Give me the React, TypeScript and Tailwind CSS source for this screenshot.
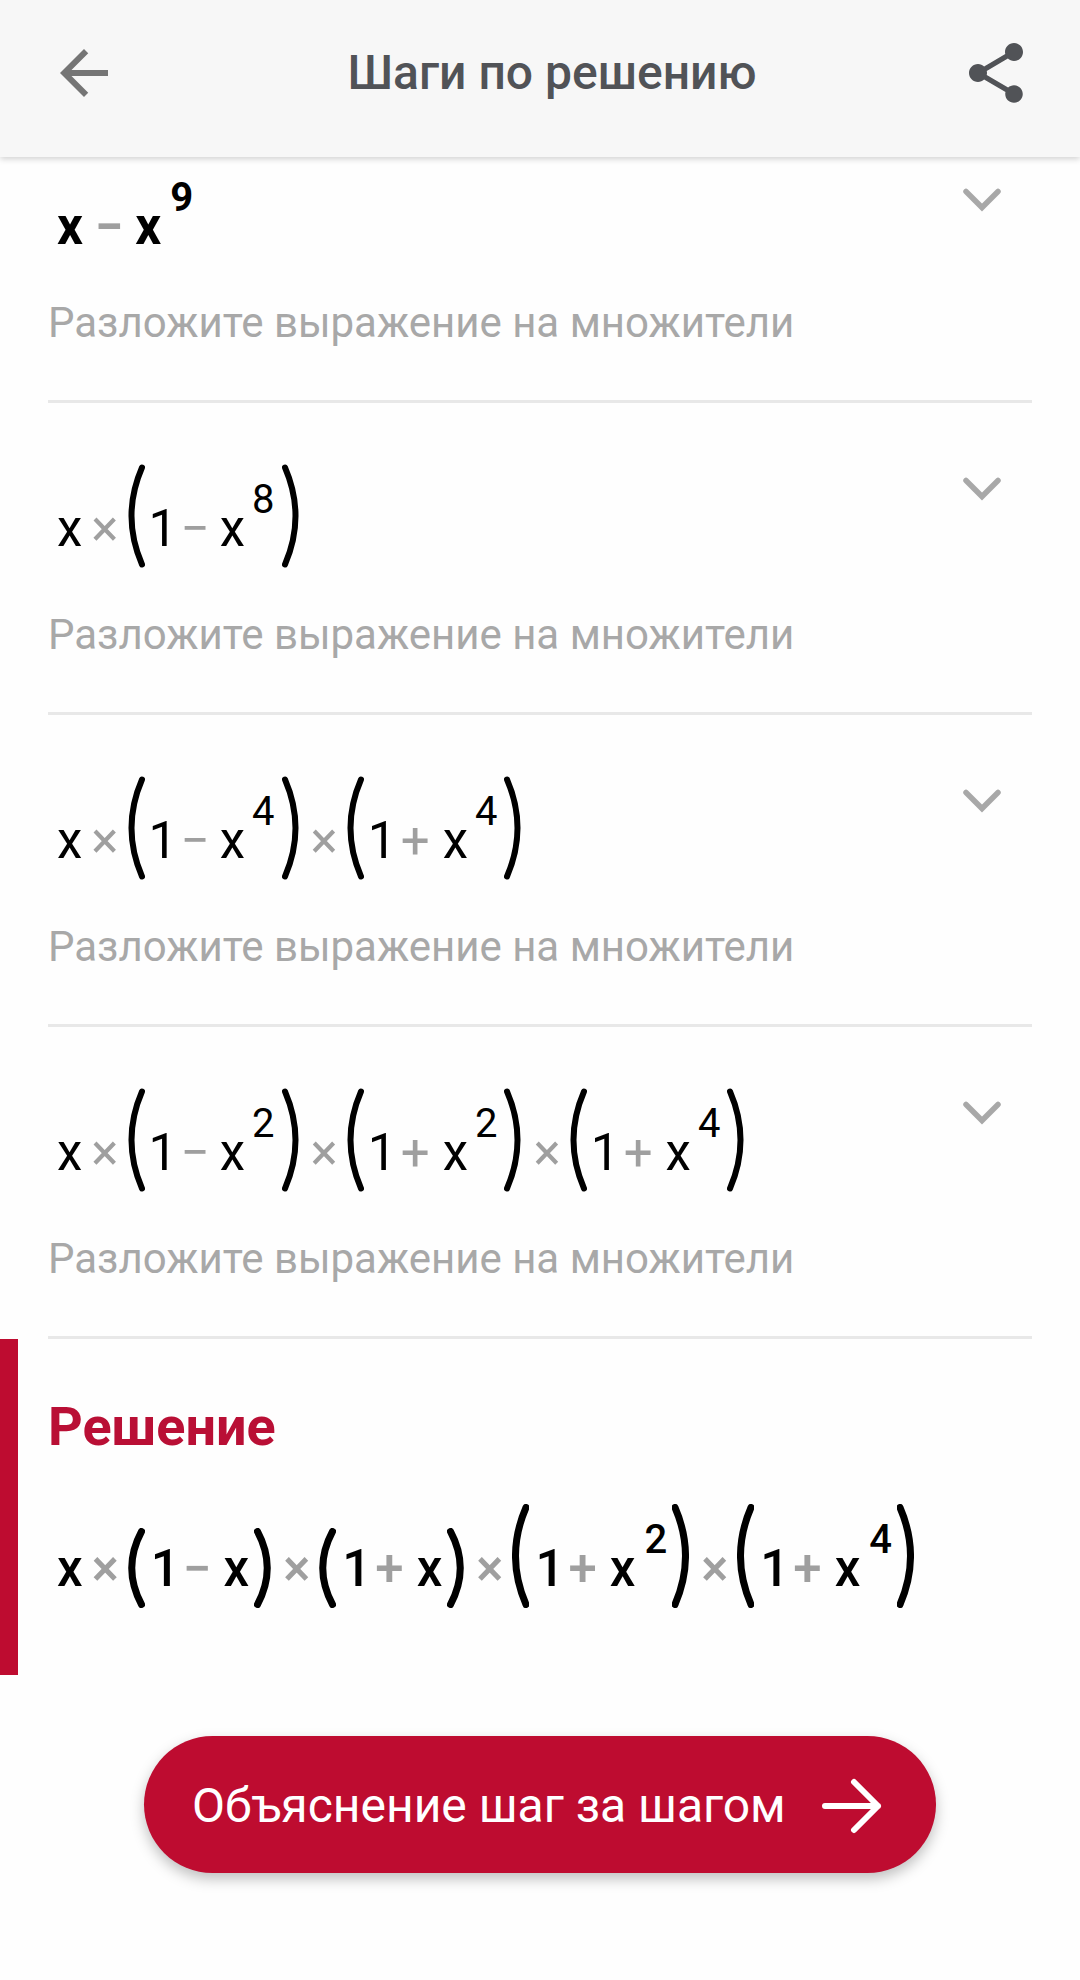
import { FC, ReactNode } from "react";
import { MdArrowBack, MdShare } from "react-icons/md";

interface ParenProps {
  tall?: boolean;
  close?: boolean;
  heavy?: boolean;
}

const Paren: FC<ParenProps> = ({ tall, close, heavy }) => {
  const height = tall ? 104 : 80;
  const d = tall ? "M14 3.5Q-7 52 14 100.5" : "M13.5 3.5Q-6 40 13.5 76.5";
  const openGap = heavy ? "mr-1.5" : "mr-1";
  const closeGap = heavy ? "ml-[5px]" : "ml-[7px]";
  return (
    <svg
      viewBox={`0 0 17 ${height}`}
      className={`w-[17px] shrink-0 ${tall ? "h-[104px]" : "h-20"} ${
        close ? `${closeGap} mr-[3px] -scale-x-100` : openGap
      }`}
      fill="none"
      stroke="currentColor"
      strokeWidth={heavy ? 7 : 6}
      strokeLinecap="round"
      role="img"
      aria-label={close ? ")" : "("}
    >
      <path d={d} />
    </svg>
  );
};

interface ExpressionProps {
  tokens: string[];
  weight?: "normal" | "medium" | "bold";
}

const weights = {
  normal: "font-normal",
  medium: "font-medium",
  bold: "font-bold",
};

// "(" and ")" are the tall pair, "[" and "]" the short one, "^n" is a power
const Expression: FC<ExpressionProps> = ({ tokens, weight = "normal" }) => {
  const heavy = weight !== "normal";

  const renderToken = (token: string, i: number): ReactNode => {
    if ("()[]".includes(token))
      return (
        <Paren
          key={i}
          tall={"()".includes(token)}
          close={")]".includes(token)}
          heavy={heavy}
        />
      );
    if (token[0] === "^")
      return (
        <sup
          key={i}
          className={`static mb-12 text-[40px] leading-[40px] ${
            heavy ? "ml-[9px]" : "ml-[7px]"
          }`}
        >
          {token.slice(1)}
        </sup>
      );
    if (token === "×")
      return (
        <span key={i} className="mx-[9px] text-[#9f9f9f]">
          ×
        </span>
      );
    if (token === "+")
      return (
        <span key={i} className="mx-[13px] text-[#9f9f9f]">
          +
        </span>
      );
    if (token === "−")
      return (
        <span
          key={i}
          className={`ml-3 text-[#9f9f9f] ${heavy ? "mr-3" : "mr-2.5"}`}
        >
          −
        </span>
      );
    return (
      <span key={i} className={token === "1" ? "w-5" : ""}>
        {token}
      </span>
    );
  };

  return (
    <div
      className={`flex items-end pl-[9px] text-[51px] leading-[79px] text-black ${weights[weight]}`}
    >
      {tokens.map(renderToken)}
    </div>
  );
};

interface StepProps {
  tokens: string[];
  first?: boolean;
}

const Step: FC<StepProps> = ({ tokens, first }) => {
  return (
    <li className="mx-12 flex justify-between border-b-[3px] border-[#e8e8e8]">
      <div className={`pb-[53px] ${first ? "pt-[21px]" : "pt-[61px]"}`}>
        <Expression tokens={tokens} weight={first ? "bold" : "normal"} />
        <p
          className={`text-[42px] leading-[48px] text-[#a8a8a8] ${
            first ? "mt-[33px]" : "mt-[43px]"
          }`}
        >
          Разложите выражение на множители
        </p>
      </div>
      <button
        aria-label="Показать шаг"
        className={`mr-[14px] flex h-[72px] w-[72px] shrink-0 items-center justify-center ${
          first ? "mt-[7px]" : "mt-[50px]"
        }`}
      >
        <svg
          viewBox="0 0 40 24"
          className="h-6 w-10"
          fill="none"
          stroke="#a8a8a8"
          strokeWidth={5.5}
          strokeLinecap="round"
        >
          <path d="M4 3.5L20 19.5L36 3.5" />
        </svg>
      </button>
    </li>
  );
};

const steps = [
  ["x", "−", "x", "^9"],
  ["x", "×", "(", "1", "−", "x", "^8", ")"],
  ["x", "×", "(", "1", "−", "x", "^4", ")", "×", "(", "1", "+", "x", "^4", ")"],
  [
    ...["x", "×", "(", "1", "−", "x", "^2", ")"],
    ...["×", "(", "1", "+", "x", "^2", ")"],
    ...["×", "(", "1", "+", "x", "^4", ")"],
  ],
];

const solution = [
  ...["x", "×", "[", "1", "−", "x", "]"],
  ...["×", "[", "1", "+", "x", "]"],
  ...["×", "(", "1", "+", "x", "^2", ")"],
  ...["×", "(", "1", "+", "x", "^4", ")"],
];

const App: FC = () => {
  return (
    <div className="min-h-screen bg-[#fefefe] font-['Roboto',sans-serif]">
      <header className="relative flex items-center justify-between bg-[#f7f7f7] px-12 pt-[37px] pb-12 shadow-[0_2px_6px_rgba(0,0,0,0.18)]">
        <button aria-label="Назад" className="text-[#757575]">
          <MdArrowBack size={72} />
        </button>
        <h1 className="pl-6 text-5xl leading-[72px] font-medium text-[#515357]">
          Шаги по решению
        </h1>
        <button aria-label="Поделиться" className="text-[#515357]">
          <MdShare size={72} />
        </button>
      </header>

      <main>
        <ol>
          {steps.map((tokens, i) => (
            <Step key={i} tokens={tokens} first={i === 0} />
          ))}
        </ol>

        <section className="border-l-[18px] border-[#be0c30] pt-14 pb-[67px] pl-[30px]">
          <h2 className="mb-[45px] text-[54px] leading-[64px] font-bold text-[#b90f35]">
            Решение
          </h2>
          <Expression tokens={solution} weight="medium" />
        </section>

        <div className="px-36 pt-[61px] pb-12">
          <button className="flex w-full items-center justify-between rounded-full bg-[#be0c30] pt-[33px] pb-[31px] pr-[52px] pl-12 text-5xl leading-[73px] text-white shadow-[0_6px_14px_rgba(0,0,0,0.25)]">
            Объяснение шаг за шагом
            <svg
              viewBox="0 0 64 60"
              className="h-[60px] w-16 shrink-0"
              fill="none"
              stroke="currentColor"
              strokeWidth={6}
              strokeLinecap="round"
              strokeLinejoin="round"
            >
              <path d="M5 30H58M34 6L58 30L34 54" />
            </svg>
          </button>
        </div>
      </main>
    </div>
  );
};

export default App;
